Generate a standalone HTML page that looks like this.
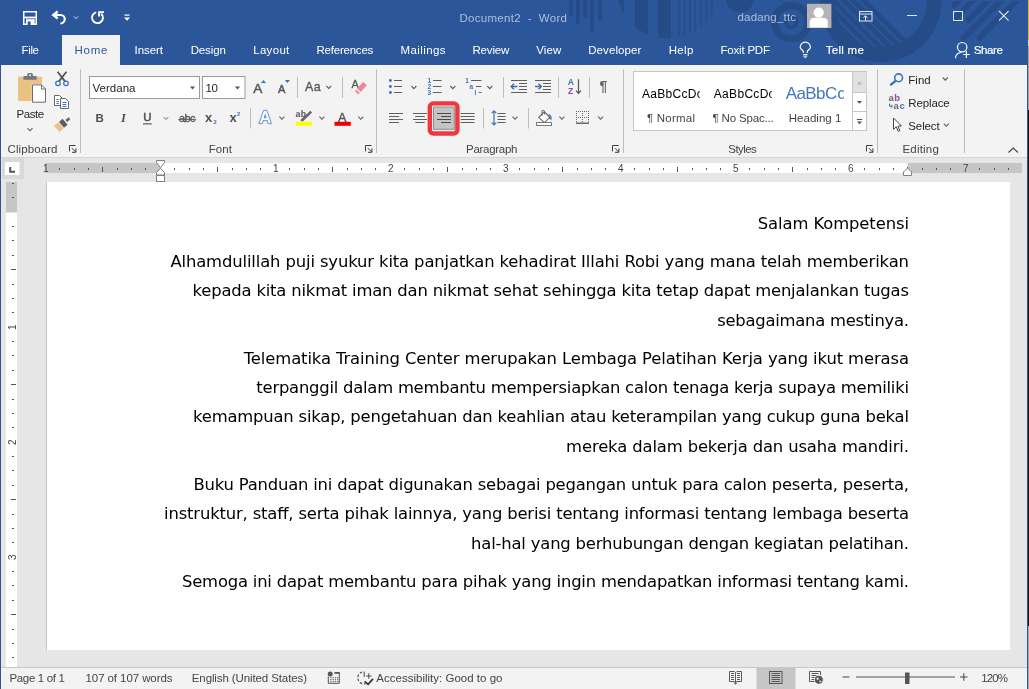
<!DOCTYPE html>
<html lang="en"><head><meta charset="utf-8"><title>Document2 - Word</title>
<style>
html,body{margin:0;padding:0;background:#e6e6e6;overflow:hidden}
#app{position:absolute;left:0;top:0;width:1029px;height:689px;overflow:hidden;font-family:'Liberation Sans',sans-serif}
svg{display:block;will-change:transform}
text{white-space:pre}
</style></head><body>
<div id="app">
<svg width="1029" height="689" viewBox="0 0 1029 689">
<rect x="0" y="0" width="1029" height="689" fill="#e6e6e6" />
<rect x="0" y="0" width="1028" height="65" fill="#2b579a" />
<g fill="#000" fill-opacity="0.125" stroke="none">
<rect x="568.9" y="0" width="3.8" height="16.5" fill="#000" />
<rect x="576" y="0" width="3.8" height="24" fill="#000" />
<rect x="583.1" y="0" width="3.7" height="17.8" fill="#000" />
<rect x="590.1" y="0" width="3.8" height="32.7" fill="#000" />
<rect x="598.3" y="0" width="3.7" height="21.1" fill="#000" />
</g>
<clipPath id="cpC"><circle cx="668" cy="-13" r="51.5"/></clipPath>
<g clip-path="url(#cpC)" fill="#000" fill-opacity="0.125">
<rect x="617" y="0" width="7" height="45" fill="#000" />
<rect x="635" y="0" width="13" height="45" fill="#000" />
<rect x="658" y="0" width="13" height="45" fill="#000" />
<rect x="678.1" y="0" width="1.6" height="45" fill="#000" />
<rect x="683.6" y="0" width="1.6" height="45" fill="#000" />
<rect x="689.1" y="0" width="1.6" height="45" fill="#000" />
<rect x="694.6" y="0" width="1.6" height="45" fill="#000" />
<rect x="700.1" y="0" width="1.6" height="45" fill="#000" />
<rect x="705.6" y="0" width="1.6" height="45" fill="#000" />
<rect x="711.1" y="0" width="1.6" height="45" fill="#000" />
<rect x="716.6" y="0" width="1.6" height="45" fill="#000" />
</g>
<g fill="#000" fill-opacity="0.125">
<path d="M725.8 0 A14 14 0 0 0 753.8 0 Z" fill="#000" transform="translate(0,-1.5)"/>
</g>
<g fill="none" stroke="#000" stroke-opacity="0.125">
<circle cx="791.4" cy="22.2" r="16.7" fill="none" stroke="#000" stroke-width="7.3" />
<circle cx="791.4" cy="22.2" r="5.2" fill="none" stroke="#000" stroke-width="4" />
<circle cx="880.5" cy="1.2" r="53.5" fill="none" stroke="#000" stroke-width="15" />
</g>
<clipPath id="cpA"><circle cx="880.5" cy="1.2" r="46"/></clipPath>
<g clip-path="url(#cpA)" fill="#000" fill-opacity="0.125">
<path d="M859.5 0 L866.7 0 L936.7 70 L929.5 70 Z" fill="#000" />
<path d="M849.5 0 L856.7 0 L926.7 70 L919.5 70 Z" fill="#000" />
<path d="M839.5 0 L846.7 0 L916.7 70 L909.5 70 Z" fill="#000" />
<path d="M829.5 0 L836.7 0 L906.7 70 L899.5 70 Z" fill="#000" />
<path d="M819.5 0 L826.7 0 L896.7 70 L889.5 70 Z" fill="#000" />
<path d="M809.5 0 L816.7 0 L886.7 70 L879.5 70 Z" fill="#000" />
<path d="M799.5 0 L806.7 0 L876.7 70 L869.5 70 Z" fill="#000" />
<path d="M789.5 0 L796.7 0 L866.7 70 L859.5 70 Z" fill="#000" />
<path d="M779.5 0 L786.7 0 L856.7 70 L849.5 70 Z" fill="#000" />
</g>
<g fill="#000" fill-opacity="0.125">
<path d="M954.3 1 L962.4 1 L954.5 8.9 L950.5 4.8 Z" fill="#000" />
<path d="M968.5 1 L976.6 1 L954.7 22.9 L950.6 18.9 Z" fill="#000" />
<path d="M983.2 1 L991.3 1 L968.8 23.4 L964.8 19.4 Z" fill="#000" />
<path d="M996.6 1 L1004.8 1 L963.4 42.4 L959.3 38.3 Z" fill="#000" />
<path d="M1012.1 1 L1020.3 1 L979.8 41.4 L975.8 37.4 Z" fill="#000" />
</g>
<rect x="1028" y="0" width="1" height="40" fill="#d9b534" />
<rect x="1028" y="40" width="1" height="6" fill="#d8d8d8" />
<rect x="1028" y="46" width="1" height="64" fill="#a8a59c" />
<rect x="1028" y="110" width="1" height="516" fill="#17141a" />
<rect x="1028" y="626" width="1" height="63" fill="#a4a8b4" />
<rect x="1" y="65" width="1026" height="92" fill="#f3f3f3" />
<rect x="1" y="157" width="1026" height="1" fill="#d6d6d6" />
<rect x="62" y="35" width="58" height="31" fill="#f3f3f3" />
<rect x="1" y="158" width="1026" height="509" fill="#e6e6e6" />
<rect x="1" y="667" width="1026" height="1" fill="#c8c8c8" />
<rect x="1" y="668" width="1026" height="21" fill="#f3f3f3" />
<rect x="0" y="0" width="1" height="689" fill="#2b579a" />
<rect x="1027" y="0" width="1" height="689" fill="#2b579a" />
<rect x="23.75" y="11.75" width="12.5" height="12.5" fill="none" stroke="#ffffff" stroke-width="1.5" />
<rect x="24" y="16.6" width="12" height="1.8" fill="#ffffff" />
<rect x="26" y="19.2" width="8.7" height="5.5" fill="#ffffff" />
<rect x="27.7" y="21.5" width="2.9" height="3.5" fill="#2b579a" />
<path d="M53.5 15 H60.6 A4.25 4.25 0 0 1 60.4 23.5" fill="none" stroke="#ffffff" stroke-width="2.1" />
<path d="M57.7 11.5 L53.3 15 L57.7 18.5" fill="none" stroke="#ffffff" stroke-width="2.4" />
<path d="M73.7 16.3 L76 18.7 L78.3 16.3" fill="none" stroke="#93aad2" stroke-width="1.1" />
<path d="M96.2 12.3 A5.5 5.5 0 1 0 101.3 13.7" fill="none" stroke="#ffffff" stroke-width="1.9" />
<path d="M99.1 16.6 V12.1 H104" fill="none" stroke="#ffffff" stroke-width="1.9" />
<rect x="124.5" y="14.5" width="5" height="1.2" fill="#ffffff" />
<path d="M124 17.5 H130 L127 20.7 Z" fill="#ffffff" />
<text x="459.5" y="22" font-family="'Liberation Sans', sans-serif" font-size="11.5" fill="#afbfdb" textLength="107.5" lengthAdjust="spacing" >Document2  -  Word</text>
<text x="737.5" y="20.7" font-family="'Liberation Sans', sans-serif" font-size="11.5" fill="#afbfdb" textLength="58.5" lengthAdjust="spacing" >dadang_ttc</text>
<rect x="807" y="3.8" width="24.4" height="24.2" fill="#b4b4b4" />
<circle cx="818.7" cy="12.6" r="5.1" fill="#ffffff" />
<path d="M809.7 27.4 V22.6 Q809.7 17.8 814.5 17.8 H823 Q827.8 17.8 827.8 22.6 V27.4 Z" fill="#ffffff" />
<rect x="859.5" y="11.5" width="12.5" height="9.5" fill="none" stroke="#dfe6f2" stroke-width="1" />
<line x1="859.5" y1="14" x2="872" y2="14" stroke="#dfe6f2" stroke-width="1" />
<path d="M865.5 20.8 V15.8 M863.4 17.9 L865.5 15.7 L867.6 17.9" fill="none" stroke="#dfe6f2" stroke-width="1" />
<line x1="907" y1="15.5" x2="917" y2="15.5" stroke="#dfe6f2" stroke-width="1" />
<rect x="953.5" y="11.5" width="9" height="9" fill="none" stroke="#dfe6f2" stroke-width="1" />
<path d="M999 11 L1008.6 20.6 M1008.6 11 L999 20.6" fill="none" stroke="#dfe6f2" stroke-width="1.1" />
<text x="21.5" y="53.7" font-family="'Liberation Sans', sans-serif" font-size="11.5" fill="#ffffff" textLength="17.5" lengthAdjust="spacing" >File</text>
<text x="134.5" y="53.7" font-family="'Liberation Sans', sans-serif" font-size="11.5" fill="#ffffff" textLength="28.5" lengthAdjust="spacing" >Insert</text>
<text x="190.7" y="53.7" font-family="'Liberation Sans', sans-serif" font-size="11.5" fill="#ffffff" textLength="35.1" lengthAdjust="spacing" >Design</text>
<text x="253.2" y="53.7" font-family="'Liberation Sans', sans-serif" font-size="11.5" fill="#ffffff" textLength="36.1" lengthAdjust="spacing" >Layout</text>
<text x="316.5" y="53.7" font-family="'Liberation Sans', sans-serif" font-size="11.5" fill="#ffffff" textLength="56.8" lengthAdjust="spacing" >References</text>
<text x="400.5" y="53.7" font-family="'Liberation Sans', sans-serif" font-size="11.5" fill="#ffffff" textLength="45.0" lengthAdjust="spacing" >Mailings</text>
<text x="472.5" y="53.7" font-family="'Liberation Sans', sans-serif" font-size="11.5" fill="#ffffff" textLength="36.8" lengthAdjust="spacing" >Review</text>
<text x="536.2" y="53.7" font-family="'Liberation Sans', sans-serif" font-size="11.5" fill="#ffffff" textLength="25.1" lengthAdjust="spacing" >View</text>
<text x="588.2" y="53.7" font-family="'Liberation Sans', sans-serif" font-size="11.5" fill="#ffffff" textLength="53.1" lengthAdjust="spacing" >Developer</text>
<text x="668.7" y="53.7" font-family="'Liberation Sans', sans-serif" font-size="11.5" fill="#ffffff" textLength="24.6" lengthAdjust="spacing" >Help</text>
<text x="720.5" y="53.7" font-family="'Liberation Sans', sans-serif" font-size="11.5" fill="#ffffff" textLength="49.5" lengthAdjust="spacing" >Foxit PDF</text>
<text x="825.7" y="53.7" font-family="'Liberation Sans', sans-serif" font-size="11.5" fill="#ffffff" textLength="38.1" lengthAdjust="spacing" stroke="#fff" stroke-width="0.18">Tell me</text>
<text x="973.7" y="53.7" font-family="'Liberation Sans', sans-serif" font-size="11.5" fill="#ffffff" textLength="29.3" lengthAdjust="spacing" stroke="#fff" stroke-width="0.18">Share</text>
<text x="74.5" y="53.7" font-family="'Liberation Sans', sans-serif" font-size="11.5" fill="#2b579a" textLength="33.0" lengthAdjust="spacing" >Home</text>
<path d="M803.4 53 V51.8 C803.4 50 800.2 49.4 800.2 47.3 A5.1 5.1 0 0 1 810.4 47.3 C810.4 49.4 807.2 50 807.2 51.8 V53" fill="none" stroke="#ffffff" stroke-width="1.15" />
<path d="M803.2 54.5 H807.4 M803.2 56.1 H807.4 M804.5 57.6 H806.1" fill="none" stroke="#ffffff" stroke-width="1" />
<circle cx="962.2" cy="47.2" r="4.7" fill="none" stroke="#ffffff" stroke-width="1.2" />
<path d="M955.4 58.2 C955.6 54.6 958.4 52.7 961.4 52.5" fill="none" stroke="#ffffff" stroke-width="1.2" />
<path d="M963.1 54.5 H969.8 M966.4 51.1 V57.9" fill="none" stroke="#ffffff" stroke-width="1.2" />
<path d="M19.5 76.4 H40.5 Q42 76.4 42 77.9 V84 H31.8 V101 H19.5 Q18 101 18 99.5 V77.9 Q18 76.4 19.5 76.4 Z" fill="#eac282" />
<path d="M23.4 79.8 V77 Q23.4 76 24.4 76 H27.2 V74.6 Q27.2 73 28.8 73 H31.3 Q32.9 73 32.9 74.6 V76 H35.7 Q36.7 76 36.7 77 V79.8 Z" fill="#767676" />
<rect x="29.2" y="74.4" width="1.7" height="1.7" fill="#f3f3f3" />
<path d="M32.5 84.9 H41.6 L45.5 88.8 V102.2 H32.5 Z" fill="#ffffff" stroke="#6b6b6b" stroke-width="1" />
<path d="M41.5 85 V89 H45.5" fill="none" stroke="#6b6b6b" stroke-width="1" />
<text x="16.5" y="117.5" font-family="'Liberation Sans', sans-serif" font-size="11.5" fill="#262626" textLength="27.7" lengthAdjust="spacing" >Paste</text>
<path d="M27.5 128.2 L30 130.8 L32.5 128.2" fill="none" stroke="#5c5c5c" stroke-width="1.1" />
<path d="M57.6 71.8 L65.2 81.6 M66.4 71.8 L58.8 81.6" fill="none" stroke="#555" stroke-width="1.8" />
<circle cx="58" cy="83.3" r="2.3" fill="none" stroke="#3b73b9" stroke-width="1.25" />
<circle cx="66" cy="83.3" r="2.3" fill="none" stroke="#3b73b9" stroke-width="1.25" />
<path d="M54.5 95.5 H59.5 L62.5 98.5 V105.5 H54.5 Z" fill="#fff" stroke="#666" stroke-width="1" />
<path d="M60.5 98.5 H65.5 L68.5 101.5 V108.5 H60.5 Z" fill="#fff" stroke="#666" stroke-width="1" />
<path d="M56.5 99.5 H58.8 M56.5 101.5 H58.8 M56.5 103.5 H58.8 M62.5 102.5 H66.5 M62.5 104.5 H66.5 M62.5 106.5 H66.5" fill="none" stroke="#3b73b9" stroke-width="1" />
<path d="M65.4 119.9 L68.6 117.2 L70.4 119.3 L67.2 122 Z" fill="#666" />
<path d="M62.6 118.8 L67.6 124.7 L64 127.8 L59 121.9 Z" fill="#5e5e5e" />
<path d="M58.5 122.4 L63.5 128.3 L59.6 132.3 L53.8 125.4 Z" fill="#eac282" />
<text x="7.5" y="152.5" font-family="'Liberation Sans', sans-serif" font-size="11.5" fill="#444" textLength="50.0" lengthAdjust="spacing" >Clipboard</text>
<path d="M69.5 151.4 V145.5 H75.6" fill="none" stroke="#3c3c3c" stroke-width="1" />
<path d="M72 148.2 L75.6 151.9" fill="none" stroke="#3c3c3c" stroke-width="1" />
<path d="M75.9 148.4 V152.3 H72" fill="none" stroke="#3c3c3c" stroke-width="1" />
<rect x="80" y="69.5" width="1" height="83.5" fill="#bcbcbc" />
<rect x="89.5" y="76.5" width="110" height="22" fill="#fff" stroke="#999" stroke-width="1" />
<text x="92.5" y="91.5" font-family="'Liberation Sans', sans-serif" font-size="11.5" fill="#262626" textLength="43.0" lengthAdjust="spacing" >Verdana</text>
<path d="M189.9 86.6 L195.1 86.6 L192.5 89.4 Z" fill="#555" />
<rect x="202.5" y="76.5" width="42.5" height="22" fill="#fff" stroke="#999" stroke-width="1" />
<text x="205.5" y="91.5" font-family="'Liberation Sans', sans-serif" font-size="11.5" fill="#262626" textLength="12.5" lengthAdjust="spacing" >10</text>
<path d="M234.9 86.6 L240.1 86.6 L237.5 89.4 Z" fill="#555" />
<text x="253.2" y="92.8" font-family="'Liberation Sans', sans-serif" font-size="13.6" fill="#555" textLength="10.0" lengthAdjust="spacing" stroke="#555" stroke-width="0.45">A</text>
<path d="M261 83 L263.5 79.9 L266 83 Z" fill="#3b73b9" />
<text x="277.9" y="92.8" font-family="'Liberation Sans', sans-serif" font-size="11" fill="#555" textLength="8.3" lengthAdjust="spacing" stroke="#555" stroke-width="0.45">A</text>
<path d="M284.8 79.9 H290 L287.4 83 Z" fill="#3b73b9" />
<rect x="297" y="77" width="1" height="21" fill="#bcbcbc" />
<text x="305" y="90.9" font-family="'Liberation Sans', sans-serif" font-size="12.4" fill="#555" textLength="15.6" lengthAdjust="spacing" stroke="#555" stroke-width="0.35">Aa</text>
<path d="M326.3 85.9 L328.8 88.5 L331.3 85.9" fill="none" stroke="#5c5c5c" stroke-width="1.1" />
<rect x="342" y="77" width="1" height="21" fill="#bcbcbc" />
<text x="351.4" y="88" font-family="'Liberation Sans', sans-serif" font-size="11" fill="#555" textLength="7.0" lengthAdjust="spacing" stroke="#555" stroke-width="0.3">A</text>
<path d="M357.2 88.6 L362.6 82.6 Q363.3 82 364 82.6 L366.2 84.6 Q366.8 85.3 366.2 86 L360.8 92 Z" fill="#e78a9c" />
<path d="M356.4 89.5 L360 92.8 L359 93.9 Q358.3 94.5 357.6 93.9 L355.4 91.9 Q354.8 91.2 355.4 90.6 Z" fill="#ea9aaa" />
<text x="95.5" y="121.8" font-family="'Liberation Sans', sans-serif" font-size="11.5" fill="#505050" font-weight="bold" textLength="8.1" lengthAdjust="spacing" >B</text>
<text x="121" y="121.8" font-family="'Liberation Serif', sans-serif" font-size="12.5" fill="#505050" font-weight="bold" font-style="italic" >I</text>
<text x="143.2" y="121.3" font-family="'Liberation Sans', sans-serif" font-size="11.5" fill="#505050" textLength="8.6" lengthAdjust="spacing" stroke="#505050" stroke-width="0.5">U</text>
<rect x="143" y="123.3" width="8.8" height="1.1" fill="#505050" />
<path d="M163.8 117.14999999999999 L166 119.45 L168.2 117.14999999999999" fill="none" stroke="#6a6a6a" stroke-width="1" />
<text x="179" y="121.8" font-family="'Liberation Sans', sans-serif" font-size="11" fill="#555" textLength="16.6" lengthAdjust="spacing" stroke="#555" stroke-width="0.3">abc</text>
<rect x="178.3" y="118.8" width="17.8" height="1" fill="#555" />
<text x="205" y="121.8" font-family="'Liberation Sans', sans-serif" font-size="13" fill="#505050" font-weight="bold" textLength="7.3" lengthAdjust="spacing" >x</text>
<text x="213.6" y="123.8" font-family="'Liberation Sans', sans-serif" font-size="5.8" fill="#3b73b9" font-weight="bold" >2</text>
<text x="229.5" y="121.8" font-family="'Liberation Sans', sans-serif" font-size="13" fill="#505050" font-weight="bold" textLength="7.3" lengthAdjust="spacing" >x</text>
<text x="237" y="116.2" font-family="'Liberation Sans', sans-serif" font-size="5.8" fill="#3b73b9" font-weight="bold" >2</text>
<rect x="250" y="108" width="1" height="20.5" fill="#bcbcbc" />
<text x="259.3" y="123" font-family="'Liberation Sans', sans-serif" font-size="16.6" fill="#fff" font-weight="bold" textLength="13.3" lengthAdjust="spacing" stroke="#9dbde6" stroke-width="2.6" stroke-opacity="0.6" paint-order="stroke">A</text>
<text x="259.3" y="123" font-family="'Liberation Sans', sans-serif" font-size="16.6" fill="#fff" font-weight="bold" textLength="13.3" lengthAdjust="spacing" stroke="#3b78c4" stroke-width="1.2" paint-order="stroke">A</text>
<path d="M279.4 116.7 L281.9 119.3 L284.4 116.7" fill="none" stroke="#5c5c5c" stroke-width="1.1" />
<text x="295.6" y="116.8" font-family="'Liberation Sans', sans-serif" font-size="8.8" fill="#555" font-weight="bold" textLength="10.4" lengthAdjust="spacing" >ab</text>
<path d="M311.2 111.6 L301.6 120.8" fill="none" stroke="#666" stroke-width="2.6" />
<path d="M302.6 118 L300 121.3 L304 120.2 Z" fill="#666" />
<rect x="295.8" y="121.8" width="16.2" height="4" fill="#ffff00" />
<path d="M319.4 116.7 L321.9 119.3 L324.4 116.7" fill="none" stroke="#5c5c5c" stroke-width="1.1" />
<text x="338" y="121.5" font-family="'Liberation Sans', sans-serif" font-size="12.7" fill="#555" textLength="10" lengthAdjust="spacing" stroke="#555" stroke-width="0.4">A</text>
<rect x="334.5" y="121.8" width="16.3" height="4" fill="#ee0000" />
<path d="M358.3 116.7 L360.8 119.3 L363.3 116.7" fill="none" stroke="#5c5c5c" stroke-width="1.1" />
<text x="208.7" y="152.5" font-family="'Liberation Sans', sans-serif" font-size="11.5" fill="#444" textLength="23.3" lengthAdjust="spacing" >Font</text>
<path d="M365.5 151.4 V145.5 H371.6" fill="none" stroke="#3c3c3c" stroke-width="1" />
<path d="M368 148.2 L371.6 151.9" fill="none" stroke="#3c3c3c" stroke-width="1" />
<path d="M371.9 148.4 V152.3 H368" fill="none" stroke="#3c3c3c" stroke-width="1" />
<rect x="376" y="69.5" width="1" height="83.5" fill="#bcbcbc" />
<circle cx="390.4" cy="80.5" r="1.45" fill="#3b73b9" />
<rect x="394" y="80.0" width="8" height="1" fill="#5f5f5f" />
<circle cx="390.4" cy="86.5" r="1.45" fill="#3b73b9" />
<rect x="394" y="86.0" width="8" height="1" fill="#5f5f5f" />
<circle cx="390.4" cy="92.5" r="1.45" fill="#3b73b9" />
<rect x="394" y="92.0" width="8" height="1" fill="#5f5f5f" />
<path d="M411.4 86.0 L413.9 88.6 L416.4 86.0" fill="none" stroke="#5c5c5c" stroke-width="1.1" />
<text x="427.6" y="82.9" font-family="'Liberation Sans', sans-serif" font-size="6.5" fill="#3b73b9" font-weight="bold" >1</text>
<rect x="433" y="80.0" width="8.6" height="1" fill="#5f5f5f" />
<text x="427.6" y="88.9" font-family="'Liberation Sans', sans-serif" font-size="6.5" fill="#3b73b9" font-weight="bold" >2</text>
<rect x="433" y="86.0" width="8.6" height="1" fill="#5f5f5f" />
<text x="427.6" y="94.9" font-family="'Liberation Sans', sans-serif" font-size="6.5" fill="#3b73b9" font-weight="bold" >3</text>
<rect x="433" y="92.0" width="8.6" height="1" fill="#5f5f5f" />
<path d="M450.3 86.0 L452.8 88.6 L455.3 86.0" fill="none" stroke="#5c5c5c" stroke-width="1.1" />
<text x="465.3" y="82.9" font-family="'Liberation Sans', sans-serif" font-size="6.5" fill="#3b73b9" font-weight="bold" >1</text>
<rect x="471" y="80.0" width="10.5" height="1" fill="#5f5f5f" />
<text x="469.6" y="88.6" font-family="'Liberation Sans', sans-serif" font-size="6.5" fill="#3b73b9" font-weight="bold" >a</text>
<rect x="476" y="86.0" width="5.5" height="1" fill="#5f5f5f" />
<text x="474.6" y="94.9" font-family="'Liberation Sans', sans-serif" font-size="6.5" fill="#3b73b9" font-weight="bold" >i</text>
<rect x="478.8" y="92.0" width="2.7" height="1" fill="#5f5f5f" />
<path d="M487.3 86.0 L489.8 88.6 L492.3 86.0" fill="none" stroke="#5c5c5c" stroke-width="1.1" />
<rect x="503" y="77" width="1" height="21" fill="#bcbcbc" />
<rect x="511" y="80.0" width="16" height="1" fill="#5f5f5f" />
<rect x="511" y="92.0" width="16" height="1" fill="#5f5f5f" />
<rect x="519" y="83.0" width="8" height="1" fill="#5f5f5f" />
<rect x="519" y="86.0" width="8" height="1" fill="#5f5f5f" />
<rect x="519" y="89.0" width="8" height="1" fill="#5f5f5f" />
<path d="M511.3 86.5 H517.5 M514 83.7 L511.2 86.5 L514 89.3" fill="none" stroke="#3b73b9" stroke-width="1.5" />
<rect x="535" y="80.0" width="16" height="1" fill="#5f5f5f" />
<rect x="535" y="92.0" width="16" height="1" fill="#5f5f5f" />
<rect x="543" y="83.0" width="8" height="1" fill="#5f5f5f" />
<rect x="543" y="86.0" width="8" height="1" fill="#5f5f5f" />
<rect x="543" y="89.0" width="8" height="1" fill="#5f5f5f" />
<path d="M535 86.5 H541.2 M538.5 83.7 L541.3 86.5 L538.5 89.3" fill="none" stroke="#3b73b9" stroke-width="1.5" />
<rect x="558" y="77" width="1" height="21" fill="#bcbcbc" />
<text x="567.7" y="85.3" font-family="'Liberation Sans', sans-serif" font-size="8.5" fill="#3b73b9" font-weight="bold" textLength="6.3" lengthAdjust="spacing" >A</text>
<text x="567.9" y="93.7" font-family="'Liberation Sans', sans-serif" font-size="8.6" fill="#8e4bb0" font-weight="bold" textLength="5.9" lengthAdjust="spacing" >Z</text>
<path d="M578.5 79.3 V93 M576 90.6 L578.5 93.4 L581 90.6" fill="none" stroke="#555" stroke-width="1.2" />
<rect x="589" y="77" width="1" height="21" fill="#bcbcbc" />
<text x="599.6" y="90.8" font-family="'Liberation Sans', sans-serif" font-size="14" fill="#666" font-weight="bold" textLength="10.2" lengthAdjust="spacing" >¶</text>
<rect x="389" y="113.0" width="14" height="1" fill="#5f5f5f" />
<rect x="389" y="116.0" width="10" height="1" fill="#5f5f5f" />
<rect x="389" y="119.0" width="14" height="1" fill="#5f5f5f" />
<rect x="389" y="122.0" width="10" height="1" fill="#5f5f5f" />
<rect x="413" y="113.0" width="14" height="1" fill="#5f5f5f" />
<rect x="415.25" y="116.0" width="9.5" height="1" fill="#5f5f5f" />
<rect x="413" y="119.0" width="14" height="1" fill="#5f5f5f" />
<rect x="415.25" y="122.0" width="9.5" height="1" fill="#5f5f5f" />
<rect x="429.8" y="103.4" width="27.6" height="30.1" fill="none" stroke="#ee3840" stroke-width="4.4" rx="3.6" />
<rect x="432.5" y="106.2" width="22.5" height="23.6" fill="#e9e9e9" />
<rect x="433.5" y="107" width="20.8" height="22.3" fill="#c4c4c4" stroke="#8e8e8e" stroke-width="1" />
<rect x="437" y="113.0" width="14" height="1" fill="#4a4a4a" />
<rect x="441" y="116.0" width="10" height="1" fill="#4a4a4a" />
<rect x="437" y="119.0" width="14" height="1" fill="#4a4a4a" />
<rect x="441" y="122.0" width="10" height="1" fill="#4a4a4a" />
<rect x="460.6" y="113.0" width="14.0" height="1" fill="#5f5f5f" />
<rect x="460.6" y="116.0" width="14.0" height="1" fill="#5f5f5f" />
<rect x="460.6" y="119.0" width="14.0" height="1" fill="#5f5f5f" />
<rect x="460.6" y="122.0" width="14.0" height="1" fill="#5f5f5f" />
<rect x="483" y="108" width="1" height="20.5" fill="#bcbcbc" />
<path d="M494 110.8 V125 M491.7 113.2 L494 110.8 L496.3 113.2 M491.7 122.6 L494 125 L496.3 122.6" fill="none" stroke="#3b73b9" stroke-width="1.2" />
<rect x="497.5" y="113.0" width="8.1" height="1" fill="#5f5f5f" />
<rect x="497.5" y="116.0" width="8.1" height="1" fill="#5f5f5f" />
<rect x="497.5" y="119.0" width="8.1" height="1" fill="#5f5f5f" />
<rect x="497.5" y="122.0" width="8.1" height="1" fill="#5f5f5f" />
<path d="M512.5 116.7 L515 119.3 L517.5 116.7" fill="none" stroke="#5c5c5c" stroke-width="1.1" />
<rect x="528" y="108" width="1" height="20.5" fill="#bcbcbc" />
<path d="M538.8 117.3 L544.3 111.8 L549.8 117.3 L544.3 122.6 Z" fill="#fff" stroke="#666" stroke-width="1.1" />
<path d="M542 116 V111.3 Q542 110.3 543.2 110.3 Q544.4 110.3 544.4 111.3 V114.5" fill="none" stroke="#666" stroke-width="1" />
<path d="M548.3 113.8 Q552.6 115.5 551.4 120.4 Q550 118.6 548.9 118.4 L550 117.3 Z" fill="#3b73b9" />
<rect x="536.5" y="122.5" width="15" height="3" fill="#fff" stroke="#7a7a7a" stroke-width="1" />
<path d="M559.4 116.7 L561.9 119.3 L564.4 116.7" fill="none" stroke="#5c5c5c" stroke-width="1.1" />
<path d="M576 111.5 H589 M576 117.5 H589" fill="none" stroke="#666" stroke-width="1" stroke-dasharray="1 1"/>
<path d="M576.5 111 V123 M582.5 111 V123 M588.5 111 V123" fill="none" stroke="#666" stroke-width="1" stroke-dasharray="1 1"/>
<rect x="576" y="122.55" width="13" height="1.3" fill="#555" />
<path d="M598.1 116.7 L600.6 119.3 L603.1 116.7" fill="none" stroke="#5c5c5c" stroke-width="1.1" />
<text x="466" y="152.5" font-family="'Liberation Sans', sans-serif" font-size="11.5" fill="#444" textLength="51.5" lengthAdjust="spacing" >Paragraph</text>
<path d="M612.5 151.4 V145.5 H618.6" fill="none" stroke="#3c3c3c" stroke-width="1" />
<path d="M615 148.2 L618.6 151.9" fill="none" stroke="#3c3c3c" stroke-width="1" />
<path d="M618.9 148.4 V152.3 H615" fill="none" stroke="#3c3c3c" stroke-width="1" />
<rect x="623" y="69.5" width="1" height="83.5" fill="#bcbcbc" />
<rect x="633.5" y="71.5" width="233" height="59" fill="#fff" stroke="#c6c6c6" stroke-width="1" />
<rect x="852.5" y="72" width="14" height="20.5" fill="#e1e1e1" />
<path d="M852.5 72 V130 M852.5 92.5 H866 M852.5 111.5 H866" fill="none" stroke="#c6c6c6" stroke-width="1" />
<path d="M857 84.5 L859.5 81.5 L862 84.5 Z" fill="#b5b5b5" />
<path d="M856.9 100.89999999999999 L862.1 100.89999999999999 L859.5 103.7 Z" fill="#555" />
<rect x="856.8" y="119.0" width="5.5" height="1" fill="#555" />
<path d="M856.9 121.39999999999999 L862.1 121.39999999999999 L859.5 124.2 Z" fill="#555" />
<clipPath id="cpS1"><rect x="636" y="80" width="63.7" height="25"/></clipPath>
<text x="642" y="97.6" font-family="'Liberation Sans', sans-serif" font-size="12" fill="#000" textLength="60.8" lengthAdjust="spacing" clip-path="url(#cpS1)">AaBbCcDc</text>
<text x="647" y="122" font-family="'Liberation Sans', sans-serif" font-size="11.5" fill="#444" textLength="48" lengthAdjust="spacing" >¶ Normal</text>
<clipPath id="cpS2"><rect x="708" y="80" width="63.8" height="25"/></clipPath>
<text x="713.8" y="97.6" font-family="'Liberation Sans', sans-serif" font-size="12" fill="#000" textLength="60.8" lengthAdjust="spacing" clip-path="url(#cpS2)">AaBbCcDc</text>
<text x="712.5" y="122" font-family="'Liberation Sans', sans-serif" font-size="11.5" fill="#444" textLength="61.3" lengthAdjust="spacing" >¶ No Spac...</text>
<text x="785.8" y="99.3" font-family="'Liberation Sans', sans-serif" font-size="17" fill="#4078be" textLength="51.4" lengthAdjust="spacing" >AaBbC</text>
<clipPath id="cpH"><rect x="780" y="80" width="63.8" height="30"/></clipPath>
<text x="837.2" y="99.3" font-family="'Liberation Sans', sans-serif" font-size="17" fill="#4078be" clip-path="url(#cpH)">c</text>
<text x="788.8" y="122" font-family="'Liberation Sans', sans-serif" font-size="11.5" fill="#444" textLength="52.5" lengthAdjust="spacing" >Heading 1</text>
<text x="728.3" y="152.5" font-family="'Liberation Sans', sans-serif" font-size="11.5" fill="#444" textLength="28.5" lengthAdjust="spacing" >Styles</text>
<path d="M866.5 151.4 V145.5 H872.6" fill="none" stroke="#3c3c3c" stroke-width="1" />
<path d="M869 148.2 L872.6 151.9" fill="none" stroke="#3c3c3c" stroke-width="1" />
<path d="M872.9 148.4 V152.3 H869" fill="none" stroke="#3c3c3c" stroke-width="1" />
<rect x="877" y="69.5" width="1" height="83.5" fill="#bcbcbc" />
<circle cx="898.6" cy="77.8" r="3.9" fill="none" stroke="#3b73b9" stroke-width="1.6" />
<path d="M895.6 80.9 L890.9 84.6" fill="none" stroke="#3b73b9" stroke-width="2.4" stroke-linecap="round"/>
<text x="908.3" y="83.8" font-family="'Liberation Sans', sans-serif" font-size="11.5" fill="#262626" textLength="22.4" lengthAdjust="spacing" >Find</text>
<path d="M942.8 77.5 L945.3 80.1 L947.8 77.5" fill="none" stroke="#5c5c5c" stroke-width="1.1" />
<text x="888.6" y="101.3" font-family="'Liberation Sans', sans-serif" font-size="9.5" fill="#666" font-weight="bold" >a</text>
<text x="894.2" y="101.3" font-family="'Liberation Sans', sans-serif" font-size="9.5" fill="#8e4bb0" font-weight="bold" >b</text>
<text x="893.6" y="108.8" font-family="'Liberation Sans', sans-serif" font-size="9.5" fill="#666" font-weight="bold" >a</text>
<text x="899.4" y="108.8" font-family="'Liberation Sans', sans-serif" font-size="9.5" fill="#3b73b9" font-weight="bold" >c</text>
<path d="M889.5 103.6 V106.2 H892.3 M890.9 104.7 L892.5 106.2 L890.9 107.7" fill="none" stroke="#3b73b9" stroke-width="1" />
<text x="908.3" y="107" font-family="'Liberation Sans', sans-serif" font-size="11.5" fill="#262626" textLength="41.4" lengthAdjust="spacing" >Replace</text>
<path d="M893.5 118 V129.3 L896.2 126.8 L898.2 131.3 L899.8 130.6 L897.9 126.2 L901.5 126 Z" fill="#fff" stroke="#444" stroke-width="1" />
<text x="908.3" y="130" font-family="'Liberation Sans', sans-serif" font-size="11.5" fill="#262626" textLength="31.4" lengthAdjust="spacing" >Select</text>
<path d="M943.8 123.7 L946.3 126.3 L948.8 123.7" fill="none" stroke="#5c5c5c" stroke-width="1.1" />
<text x="902.5" y="152.5" font-family="'Liberation Sans', sans-serif" font-size="11.5" fill="#444" textLength="36.3" lengthAdjust="spacing" >Editing</text>
<rect x="964" y="69.5" width="1" height="83.5" fill="#bcbcbc" />
<path d="M1008.5 152.5 L1013.3 148 L1018 152.5" fill="none" stroke="#444" stroke-width="1.1" />
<rect x="2" y="158" width="22" height="21" fill="#d9d9d9" />
<rect x="5" y="162" width="14.5" height="13" fill="#fff" />
<path d="M10.2 167 V171.8 H15" fill="none" stroke="#555" stroke-width="2" />
<rect x="45" y="163" width="977" height="10" fill="#c6c6c6" />
<rect x="160" y="163" width="747.5" height="10" fill="#fff" />
<text x="45.7" y="172" font-family="'Liberation Sans', sans-serif" font-size="10" fill="#444" text-anchor="middle" >1</text>
<rect x="59" y="168" width="1" height="2" fill="#555" />
<rect x="74" y="168" width="1" height="2" fill="#555" />
<rect x="88" y="168" width="1" height="2" fill="#555" />
<rect x="102" y="167" width="1" height="5" fill="#555" />
<rect x="117" y="168" width="1" height="2" fill="#555" />
<rect x="131" y="168" width="1" height="2" fill="#555" />
<rect x="145" y="168" width="1" height="2" fill="#555" />
<rect x="174" y="168" width="1" height="2" fill="#555" />
<rect x="189" y="168" width="1" height="2" fill="#555" />
<rect x="203" y="168" width="1" height="2" fill="#555" />
<rect x="217" y="167" width="1" height="5" fill="#555" />
<rect x="232" y="168" width="1" height="2" fill="#555" />
<rect x="246" y="168" width="1" height="2" fill="#555" />
<rect x="260" y="168" width="1" height="2" fill="#555" />
<text x="275.7" y="172" font-family="'Liberation Sans', sans-serif" font-size="10" fill="#444" text-anchor="middle" >1</text>
<rect x="289" y="168" width="1" height="2" fill="#555" />
<rect x="304" y="168" width="1" height="2" fill="#555" />
<rect x="318" y="168" width="1" height="2" fill="#555" />
<rect x="332" y="167" width="1" height="5" fill="#555" />
<rect x="347" y="168" width="1" height="2" fill="#555" />
<rect x="361" y="168" width="1" height="2" fill="#555" />
<rect x="375" y="168" width="1" height="2" fill="#555" />
<text x="390.7" y="172" font-family="'Liberation Sans', sans-serif" font-size="10" fill="#444" text-anchor="middle" >2</text>
<rect x="404" y="168" width="1" height="2" fill="#555" />
<rect x="419" y="168" width="1" height="2" fill="#555" />
<rect x="433" y="168" width="1" height="2" fill="#555" />
<rect x="447" y="167" width="1" height="5" fill="#555" />
<rect x="462" y="168" width="1" height="2" fill="#555" />
<rect x="476" y="168" width="1" height="2" fill="#555" />
<rect x="490" y="168" width="1" height="2" fill="#555" />
<text x="505.7" y="172" font-family="'Liberation Sans', sans-serif" font-size="10" fill="#444" text-anchor="middle" >3</text>
<rect x="519" y="168" width="1" height="2" fill="#555" />
<rect x="534" y="168" width="1" height="2" fill="#555" />
<rect x="548" y="168" width="1" height="2" fill="#555" />
<rect x="562" y="167" width="1" height="5" fill="#555" />
<rect x="577" y="168" width="1" height="2" fill="#555" />
<rect x="591" y="168" width="1" height="2" fill="#555" />
<rect x="605" y="168" width="1" height="2" fill="#555" />
<text x="620.7" y="172" font-family="'Liberation Sans', sans-serif" font-size="10" fill="#444" text-anchor="middle" >4</text>
<rect x="634" y="168" width="1" height="2" fill="#555" />
<rect x="649" y="168" width="1" height="2" fill="#555" />
<rect x="663" y="168" width="1" height="2" fill="#555" />
<rect x="677" y="167" width="1" height="5" fill="#555" />
<rect x="692" y="168" width="1" height="2" fill="#555" />
<rect x="706" y="168" width="1" height="2" fill="#555" />
<rect x="720" y="168" width="1" height="2" fill="#555" />
<text x="735.7" y="172" font-family="'Liberation Sans', sans-serif" font-size="10" fill="#444" text-anchor="middle" >5</text>
<rect x="749" y="168" width="1" height="2" fill="#555" />
<rect x="764" y="168" width="1" height="2" fill="#555" />
<rect x="778" y="168" width="1" height="2" fill="#555" />
<rect x="792" y="167" width="1" height="5" fill="#555" />
<rect x="807" y="168" width="1" height="2" fill="#555" />
<rect x="821" y="168" width="1" height="2" fill="#555" />
<rect x="835" y="168" width="1" height="2" fill="#555" />
<text x="850.7" y="172" font-family="'Liberation Sans', sans-serif" font-size="10" fill="#444" text-anchor="middle" >6</text>
<rect x="864" y="168" width="1" height="2" fill="#555" />
<rect x="879" y="168" width="1" height="2" fill="#555" />
<rect x="893" y="168" width="1" height="2" fill="#555" />
<rect x="907" y="167" width="1" height="5" fill="#555" />
<rect x="922" y="168" width="1" height="2" fill="#555" />
<rect x="936" y="168" width="1" height="2" fill="#555" />
<rect x="950" y="168" width="1" height="2" fill="#555" />
<text x="965.7" y="172" font-family="'Liberation Sans', sans-serif" font-size="10" fill="#444" text-anchor="middle" >7</text>
<rect x="979" y="168" width="1" height="2" fill="#555" />
<rect x="994" y="168" width="1" height="2" fill="#555" />
<rect x="1008" y="168" width="1" height="2" fill="#555" />
<path d="M156.5 160.5 H164.5 V162.5 L160.5 167.7 L156.5 162.5 Z" fill="#fff" stroke="#808080" stroke-width="1" />
<path d="M160.5 168.3 L164.5 172.5 V175 H156.5 V172.5 Z" fill="#fff" stroke="#808080" stroke-width="1" />
<rect x="156.5" y="175.5" width="8" height="6" fill="#fff" stroke="#808080" stroke-width="1" />
<path d="M907.5 168 L911.5 172 V175.5 H903.5 V172 Z" fill="#fff" stroke="#808080" stroke-width="1" />
<rect x="6" y="182" width="11" height="485" fill="#fff" />
<rect x="6" y="182" width="11" height="30.5" fill="#c6c6c6" />
<rect x="12" y="183" width="2" height="1" fill="#555" />
<rect x="12" y="197" width="2" height="1" fill="#555" />
<rect x="12" y="226" width="2" height="1" fill="#555" />
<rect x="12" y="240" width="2" height="1" fill="#555" />
<rect x="12" y="255" width="2" height="1" fill="#555" />
<rect x="11" y="269" width="5" height="1" fill="#555" />
<rect x="12" y="284" width="2" height="1" fill="#555" />
<rect x="12" y="298" width="2" height="1" fill="#555" />
<rect x="12" y="312" width="2" height="1" fill="#555" />
<text transform="translate(16,327.2) rotate(-90)" text-anchor="middle" font-family="'Liberation Sans', sans-serif" font-size="10" fill="#444">1</text>
<rect x="12" y="341" width="2" height="1" fill="#555" />
<rect x="12" y="355" width="2" height="1" fill="#555" />
<rect x="12" y="370" width="2" height="1" fill="#555" />
<rect x="11" y="384" width="5" height="1" fill="#555" />
<rect x="12" y="399" width="2" height="1" fill="#555" />
<rect x="12" y="413" width="2" height="1" fill="#555" />
<rect x="12" y="427" width="2" height="1" fill="#555" />
<text transform="translate(16,442.2) rotate(-90)" text-anchor="middle" font-family="'Liberation Sans', sans-serif" font-size="10" fill="#444">2</text>
<rect x="12" y="456" width="2" height="1" fill="#555" />
<rect x="12" y="470" width="2" height="1" fill="#555" />
<rect x="12" y="485" width="2" height="1" fill="#555" />
<rect x="11" y="499" width="5" height="1" fill="#555" />
<rect x="12" y="514" width="2" height="1" fill="#555" />
<rect x="12" y="528" width="2" height="1" fill="#555" />
<rect x="12" y="542" width="2" height="1" fill="#555" />
<text transform="translate(16,557.2) rotate(-90)" text-anchor="middle" font-family="'Liberation Sans', sans-serif" font-size="10" fill="#444">3</text>
<rect x="12" y="571" width="2" height="1" fill="#555" />
<rect x="12" y="585" width="2" height="1" fill="#555" />
<rect x="12" y="600" width="2" height="1" fill="#555" />
<rect x="11" y="614" width="5" height="1" fill="#555" />
<rect x="12" y="629" width="2" height="1" fill="#555" />
<rect x="12" y="643" width="2" height="1" fill="#555" />
<rect x="12" y="657" width="2" height="1" fill="#555" />
<rect x="46" y="182" width="1" height="468" fill="#c4c4c4" />
<rect x="47" y="182" width="963" height="468" fill="#fff" />
<text x="757.75" y="229" font-family="'DejaVu Sans', sans-serif" font-size="16.4" fill="#000" textLength="151.25" lengthAdjust="spacing" >Salam Kompetensi</text>
<text x="170.4" y="267" font-family="'DejaVu Sans', sans-serif" font-size="16.4" fill="#000" textLength="738.6" lengthAdjust="spacing" >Alhamdulillah puji syukur kita panjatkan kehadirat Illahi Robi yang mana telah memberikan</text>
<text x="192.6" y="296" font-family="'DejaVu Sans', sans-serif" font-size="16.4" fill="#000" textLength="716.4" lengthAdjust="spacing" >kepada kita nikmat iman dan nikmat sehat sehingga kita tetap dapat menjalankan tugas</text>
<text x="717.2" y="326" font-family="'DejaVu Sans', sans-serif" font-size="16.4" fill="#000" textLength="191.8" lengthAdjust="spacing" >sebagaimana mestinya.</text>
<text x="243.75" y="364" font-family="'DejaVu Sans', sans-serif" font-size="16.4" fill="#000" textLength="665.25" lengthAdjust="spacing" >Telematika Training Center merupakan Lembaga Pelatihan Kerja yang ikut merasa</text>
<text x="256.35" y="393" font-family="'DejaVu Sans', sans-serif" font-size="16.4" fill="#000" textLength="652.65" lengthAdjust="spacing" >terpanggil dalam membantu mempersiapkan calon tenaga kerja supaya memiliki</text>
<text x="193.1" y="422" font-family="'DejaVu Sans', sans-serif" font-size="16.4" fill="#000" textLength="715.9" lengthAdjust="spacing" >kemampuan sikap, pengetahuan dan keahlian atau keterampilan yang cukup guna bekal</text>
<text x="566.1" y="452" font-family="'DejaVu Sans', sans-serif" font-size="16.4" fill="#000" textLength="342.9" lengthAdjust="spacing" >mereka dalam bekerja dan usaha mandiri.</text>
<text x="193.5" y="490" font-family="'DejaVu Sans', sans-serif" font-size="16.4" fill="#000" textLength="715.5" lengthAdjust="spacing" >Buku Panduan ini dapat digunakan sebagai pegangan untuk para calon peserta, peserta,</text>
<text x="164.1" y="519" font-family="'DejaVu Sans', sans-serif" font-size="16.4" fill="#000" textLength="744.9" lengthAdjust="spacing" >instruktur, staff, serta pihak lainnya, yang berisi tentang informasi tentang lembaga beserta</text>
<text x="471.1" y="548.5" font-family="'DejaVu Sans', sans-serif" font-size="16.4" fill="#000" textLength="437.9" lengthAdjust="spacing" >hal-hal yang berhubungan dengan kegiatan pelatihan.</text>
<text x="182.0" y="587" font-family="'DejaVu Sans', sans-serif" font-size="16.4" fill="#000" textLength="727.0" lengthAdjust="spacing" >Semoga ini dapat membantu para pihak yang ingin mendapatkan informasi tentang kami.</text>
<text x="9.4" y="682" font-family="'Liberation Sans', sans-serif" font-size="11.5" fill="#444" textLength="55.6" lengthAdjust="spacing" >Page 1 of 1</text>
<text x="85.5" y="682" font-family="'Liberation Sans', sans-serif" font-size="11.5" fill="#444" textLength="87.0" lengthAdjust="spacing" >107 of 107 words</text>
<text x="191.8" y="682" font-family="'Liberation Sans', sans-serif" font-size="11.5" fill="#444" textLength="115.2" lengthAdjust="spacing" >English (United States)</text>
<circle cx="330.2" cy="674" r="2.5" fill="#555" />
<rect x="334.5" y="672" width="5.3" height="1.8" fill="#555" />
<path d="M328.3 676.5 V683.3 H339.3 V673" fill="none" stroke="#555" stroke-width="1" />
<rect x="330.2" y="677.2" width="1.3" height="1" fill="#555" />
<rect x="332.5" y="677.2" width="1.3" height="1" fill="#555" />
<rect x="334.8" y="677.2" width="1.3" height="1" fill="#555" />
<rect x="337.1" y="677.2" width="1.3" height="1" fill="#555" />
<rect x="330.2" y="679.2" width="1.3" height="1" fill="#555" />
<rect x="332.5" y="679.2" width="1.3" height="1" fill="#555" />
<rect x="334.8" y="679.2" width="1.3" height="1" fill="#555" />
<rect x="337.1" y="679.2" width="1.3" height="1" fill="#555" />
<rect x="330.2" y="681.2" width="1.3" height="1" fill="#555" />
<rect x="332.5" y="681.2" width="1.3" height="1" fill="#555" />
<rect x="334.8" y="681.2" width="1.3" height="1" fill="#555" />
<rect x="337.1" y="681.2" width="1.3" height="1" fill="#555" />
<path d="M362.2 672 A6 6 0 0 0 365.5 683.6" fill="none" stroke="#555" stroke-width="1.2" stroke-dasharray="2.6 1.6"/>
<path d="M364.2 671.5 V677" fill="none" stroke="#555" stroke-width="1.1" />
<path d="M368.8 673.3 V678.7 M366 676 H371.6" fill="none" stroke="#555" stroke-width="1.1" />
<path d="M364.6 681.3 L368.1 684.4 L373 678.9" fill="none" stroke="#333" stroke-width="1.7" />
<text x="376.3" y="682" font-family="'Liberation Sans', sans-serif" font-size="11.5" fill="#444" textLength="126.2" lengthAdjust="spacing" >Accessibility: Good to go</text>
<path d="M729.5 671.5 H734.2 L735.5 672.8 L736.8 671.5 H741.5 V681.5 H736.8 L735.5 682.6 L734.2 681.5 H729.5 Z" fill="none" stroke="#5a5a5a" stroke-width="1" />
<path d="M735.5 673 V684 M731 673.5 H734 M731 675.5 H734 M731 677.5 H734 M731 679.5 H734 M737 673.5 H740 M737 675.5 H740 M737 677.5 H740 M737 679.5 H740" fill="none" stroke="#5a5a5a" stroke-width="1" />
<path d="M734 682.5 L735.5 684.3 L737 682.5" fill="none" stroke="#5a5a5a" stroke-width="0.9" />
<rect x="756.5" y="668" width="39" height="21" fill="#c6c6c6" />
<rect x="769.5" y="671.5" width="12.5" height="12" fill="none" stroke="#555" stroke-width="1" />
<path d="M771.5 673.5 H780 M771.5 675.5 H780 M771.5 677.5 H780 M771.5 679.5 H780 M771.5 681.5 H780" fill="none" stroke="#555" stroke-width="1" />
<path d="M814.5 681.5 H809.5 V671.5 H820.5 V675" fill="none" stroke="#5a5a5a" stroke-width="1" />
<path d="M811.5 673.5 H818.5 M811.5 675.5 H816.5 M811.5 677.5 H814.5 M811.5 679.5 H814" fill="none" stroke="#5a5a5a" stroke-width="1" />
<circle cx="818.8" cy="679.7" r="3.7" fill="#555" stroke="#555" stroke-width="0.8" />
<path d="M816.5 678 Q818 677 819 678.5 Q818.5 680 817 680 Z M819.5 680.5 Q821 680 821.5 681.5 Q820.5 682.5 819.5 682 Z" fill="#e8e8e8" />
<rect x="842.5" y="676.5" width="7" height="1" fill="#444" />
<rect x="856" y="676.5" width="99" height="1" fill="#555" />
<rect x="905" y="672.5" width="4.5" height="11.5" fill="#555" />
<rect x="960" y="676.5" width="7.5" height="1" fill="#444" />
<rect x="963.3" y="673.2" width="1" height="7.6" fill="#444" />
<text x="981.3" y="682" font-family="'Liberation Sans', sans-serif" font-size="11.5" fill="#444" textLength="26.7" lengthAdjust="spacing" >120%</text>
</svg>
</div>
</body></html>
